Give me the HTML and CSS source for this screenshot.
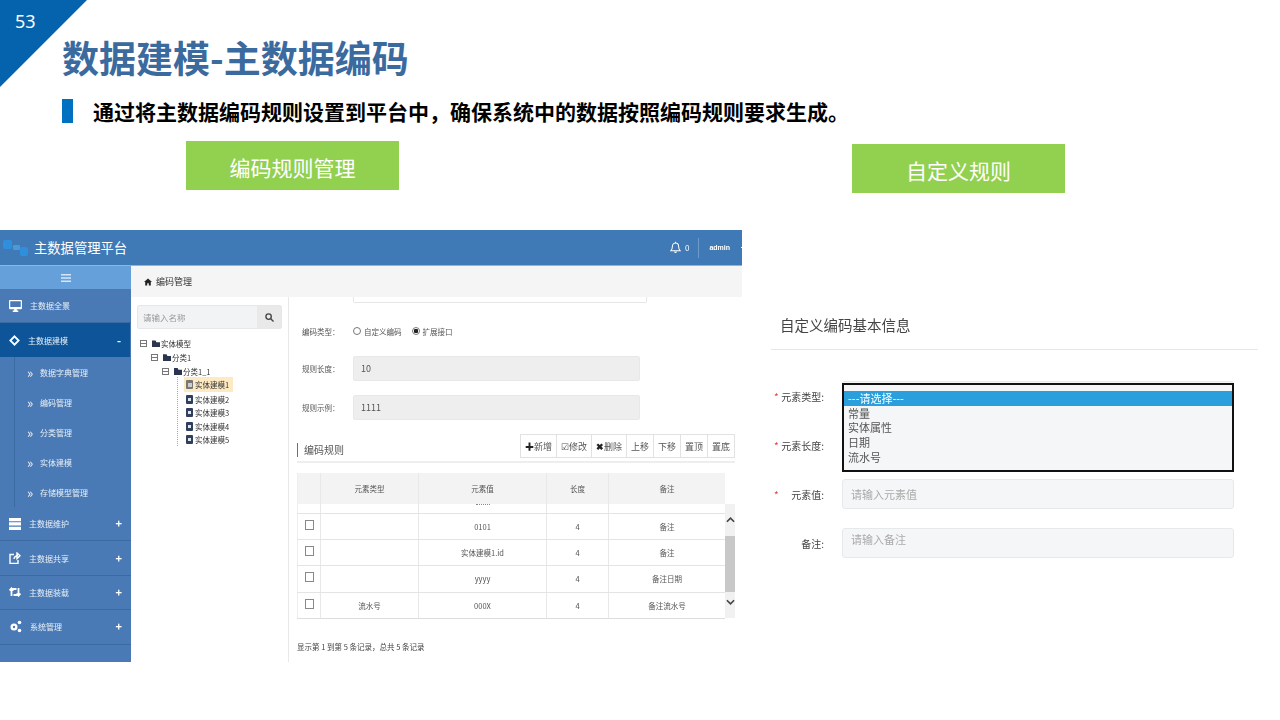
FILE: index.html
```html
<!DOCTYPE html>
<html lang="zh-CN">

<head>
    <meta charset="UTF-8">
    <title>数据建模-主数据编码</title>
    <link rel="stylesheet" href="styles.css">
</head>

<body>
    <div class="slide">
        <div class="corner"></div>
        <span class="page-no">53</span>

        <h1 class="title">数据建模-主数据编码</h1>
        <p class="subtitle"><span class="subtitle-bar"></span>通过将主数据编码规则设置到平台中，确保系统中的数据按照编码规则要求生成。</p>

        <div class="tags">
            <div class="tag">编码规则管理</div>
            <div class="tag tag-right">自定义规则</div>
        </div>

        <div class="shots">
            <!-- 左边: 平台截图 -->
            <div class="app">
                <div class="topbar">
                    <svg class="logo" viewBox="0 0 26 18" width="26" height="18">
                        <rect x="0" y="1" width="9" height="9" rx="2" fill="#2f8fdc" />
                        <rect x="10" y="6" width="7" height="5" rx="1" fill="#4a9ad8" />
                        <rect x="17" y="8" width="8" height="9" rx="2" fill="#2f8fdc" />
                    </svg>
                    <span class="brand">主数据管理平台</span>
                    <div class="top-right">
                        <svg viewBox="0 0 12 14" width="11" height="13" fill="none" stroke="#fff" stroke-width="1.1">
                            <path d="M1 10.5h10c-1.300-1.300-1.600-2.500-1.600-4.500 0-2-1.400-3.800-3.400-3.800S2.600 4 2.600 6c0 2-.3 3.200-1.600 4.500zM5 11.500c.2 1.200 1.800 1.200 2 0M6 .6v1.600" />
                        </svg>
                        <span class="bell-count">0</span>
                        <span class="top-sep"></span>
                        <span class="admin">admin</span>
                        <span class="caret"></span>
                    </div>
                </div>
                <div class="app-body">
                    <div class="sidebar">
                        <div class="side-toggle">
                            <svg viewBox="0 0 10 8" width="10" height="8" fill="#d7e6f5">
                                <path d="M0 0h10v1.600H0zM0 3.200h10v1.600H0zM0 6.400h10V8H0z" />
                            </svg>
                        </div>
                        <div class="side-item">
                            <svg viewBox="0 0 14 13" width="13" height="12" fill="#fff">
                                <path d="M1 0h12a1 1 0 0 1 1 1v8a1 1 0 0 1-1 1H8.500v1.500H10V13H4v-1.500h1.500V10H1a1 1 0 0 1-1-1V1a1 1 0 0 1 1-1zm.3 1.300v6.400h11.400V1.300z" />
                            </svg>
                            <span>主数据全景</span>
                        </div>
                        <div class="side-item active">
                            <svg viewBox="0 0 12 12" width="11" height="11" fill="none" stroke="#fff" stroke-width="2">
                                <path d="M6 1.500 10.500 6 6 10.500 1.500 6z" />
                            </svg>
                            <span>主数据建模</span>
                            <b class="side-sign">-</b>
                        </div>
                        <div class="side-sub">
                            <div class="sub-item"><span class="chev">»</span>数据字典管理</div>
                            <div class="sub-item"><span class="chev">»</span>编码管理</div>
                            <div class="sub-item"><span class="chev">»</span>分类管理</div>
                            <div class="sub-item"><span class="chev">»</span>实体建模</div>
                            <div class="sub-item"><span class="chev">»</span>存储模型管理</div>
                        </div>
                        <div class="side-item">
                            <svg viewBox="0 0 12 12" width="12" height="12" fill="#fff">
                                <path d="M0 0h12v3.300H0zM0 4.300h12v3.300H0zM0 8.700h12V12H0z" />
                            </svg>
                            <span>主数据维护</span>
                            <b class="side-sign">+</b>
                        </div>
                        <div class="side-item">
                            <svg viewBox="0 0 12 12" width="12" height="12" fill="none" stroke="#fff" stroke-width="1.400">
                                <path d="M5 2.500H1v9h8V8M5 7c.3-2 2-3.200 4-3.200M8 1l3 2.800-3 2.800z" />
                            </svg>
                            <span>主数据共享</span>
                            <b class="side-sign">+</b>
                        </div>
                        <div class="side-item">
                            <svg viewBox="0 0 12 10" width="12" height="10" fill="none" stroke="#fff" stroke-width="1.800">
                                <path d="M2.500 9V2h5M9.500 1v7h-5M0.500 3.500l2-2.200 2 2.200M7.500 6.500l2 2.200 2-2.200" />
                            </svg>
                            <span>主数据装载</span>
                            <b class="side-sign">+</b>
                        </div>
                        <div class="side-item">
                            <svg viewBox="0 0 13 13" width="13" height="13" fill="#fff">
                                <circle cx="5" cy="7" r="3.500" />
                                <circle cx="5" cy="7" r="1.200" fill="#4a7ab5" />
                                <circle cx="10.500" cy="2.500" r="1.800" />
                                <circle cx="10.500" cy="10.500" r="1.800" />
                            </svg>
                            <span>系统管理</span>
                            <b class="side-sign">+</b>
                        </div>
                    </div>

                    <div class="main">
                        <div class="crumb">
                            <svg viewBox="0 0 10 9" width="8" height="8" fill="#222">
                                <path d="M5 0 10 4.500H8.500V9H6V6H4v3H1.500V4.500H0z" />
                            </svg>
                            编码管理
                        </div>
                        <div class="panes">
                            <div class="tree-pane">
                                <div class="search">
                                    <span class="search-text">请输入名称</span>
                                    <span class="search-btn">
                                        <svg viewBox="0 0 10 10" width="9" height="9" fill="none" stroke="#444" stroke-width="1.500">
                                            <circle cx="4" cy="4" r="3" />
                                            <path d="M6.300 6.300 9.500 9.500" />
                                        </svg>
                                    </span>
                                </div>
                                <div class="tree">
                                    <div class="node lv1"><i class="fold"></i><i class="folder"></i>实体模型</div>
                                    <div class="node lv2"><i class="fold"></i><i class="folder"></i>分类1</div>
                                    <div class="node lv3"><i class="fold"></i><i class="folder"></i>分类1_1</div>
                                    <div class="leaves">
                                        <div class="node leaf current"><i class="file"></i>实体建模1</div>
                                        <div class="node leaf"><i class="file"></i>实体建模2</div>
                                        <div class="node leaf"><i class="file"></i>实体建模3</div>
                                        <div class="node leaf"><i class="file"></i>实体建模4</div>
                                        <div class="node leaf"><i class="file"></i>实体建模5</div>
                                    </div>
                                </div>
                            </div>

                            <div class="form-pane">
                                <div class="stub"></div>
                                <div class="form-row radio-row">
                                    <label>编码类型：</label>
                                    <span class="radio"></span><span class="radio-text">自定义编码</span>
                                    <span class="radio on"></span><span>扩展接口</span>
                                </div>
                                <div class="form-row">
                                    <label>规则长度：</label>
                                    <div class="readonly">10</div>
                                </div>
                                <div class="form-row">
                                    <label>规则示例：</label>
                                    <div class="readonly">1111</div>
                                </div>

                                <div class="rule-head">
                                    <h3>编码规则</h3>
                                    <div class="toolbar">
                                        <button><b>✚</b>新增</button>
                                        <button>☑修改</button>
                                        <button><b>✖</b>删除</button>
                                        <button>上移</button>
                                        <button>下移</button>
                                        <button>置顶</button>
                                        <button>置底</button>
                                    </div>
                                </div>

                                <div class="rule-table">
                                    <div class="rows">
                                        <div class="tr th">
                                            <div></div><div>元素类型</div><div>元素值</div><div>长度</div><div>备注</div>
                                        </div>
                                        <div class="tr clipped">
                                            <div></div><div></div><div><i class="cut-dots"></i></div><div></div><div></div>
                                        </div>
                                        <div class="tr">
                                            <div><i class="check"></i></div><div></div><div>0101</div><div>4</div><div>备注</div>
                                        </div>
                                        <div class="tr">
                                            <div><i class="check"></i></div><div></div><div>实体建模1.id</div><div>4</div><div>备注</div>
                                        </div>
                                        <div class="tr tall">
                                            <div><i class="check"></i></div><div></div><div>yyyy</div><div>4</div><div>备注日期</div>
                                        </div>
                                        <div class="tr">
                                            <div><i class="check"></i></div><div>流水号</div><div>000X</div><div>4</div><div>备注流水号</div>
                                        </div>
                                    </div>
                                    <div class="scroll">
                                        <svg viewBox="0 0 10 6" width="9" height="6" fill="none" stroke="#444" stroke-width="1.800">
                                            <path d="M1 5 5 1l4 4" />
                                        </svg>
                                        <div class="thumb"></div>
                                        <svg viewBox="0 0 10 6" width="9" height="6" fill="none" stroke="#444" stroke-width="1.800">
                                            <path d="M1 1l4 4 4-4" />
                                        </svg>
                                    </div>
                                </div>
                                <p class="records">显示第 1 到第 5 条记录，总共 5 条记录</p>
                            </div>
                        </div>
                    </div>
                </div>
            </div>

            <!-- 右边: 自定义编码表单 -->
            <div class="panel">
                <h2 class="panel-title">自定义编码基本信息</h2>
                <div class="panel-form">
                    <div class="field-row">
                        <label><em>*</em>元素类型:</label>
                        <div class="field"></div>
                    </div>
                    <div class="field-row">
                        <label><em>*</em>元素长度:</label>
                        <div class="field"></div>
                    </div>
                    <div class="field-row">
                        <label><em>*</em>元素值:</label>
                        <div class="field hint">请输入元素值</div>
                    </div>
                    <div class="field-row">
                        <label class="no-star">备注:</label>
                        <div class="field hint hint-high">请输入备注</div>
                    </div>
                    <div class="listbox">
                        <div class="opt selected">---请选择---</div>
                        <div class="opt">常量</div>
                        <div class="opt">实体属性</div>
                        <div class="opt">日期</div>
                        <div class="opt">流水号</div>
                    </div>
                </div>
            </div>
        </div>
    </div>
</body>

</html>
```

FILE: styles.css
```css
* {
    box-sizing: border-box;
    margin: 0;
    padding: 0;
}

body {
    background: #fff;
    font-family: "Noto Sans CJK SC", "Noto Sans", sans-serif;
}

.slide {
    position: relative;
    width: 1280px;
    height: 720px;
    overflow: hidden;
    background: #fff;
}

.corner {
    position: absolute;
    left: 0;
    top: 0;
    width: 87px;
    height: 87px;
    background: #0563ae;
    clip-path: polygon(0 0, 100% 0, 0 100%);
}

.page-no {
    position: absolute;
    left: 15px;
    top: 8px;
    color: #fff;
    font-family: "Noto Sans", sans-serif;
    font-size: 18px;
    line-height: 26px;
}

.title {
    height: 56px;
    margin-top: 29px;
    padding-left: 62px;
    color: #3b6a9e;
    font-size: 37px;
    font-weight: 700;
    line-height: 56px;
}

.subtitle {
    display: flex;
    align-items: center;
    height: 24px;
    margin-top: 14px;
    padding-left: 62px;
    color: #000;
    font-size: 21px;
    font-weight: 700;
    line-height: 24px;
    white-space: nowrap;
}

.subtitle-bar {
    width: 11px;
    height: 24px;
    margin-right: 20px;
    background: #0070c0;
}

/* 绿色标签 */
.tags {
    display: flex;
    align-items: flex-start;
    height: 89px;
    margin-top: 18px;
    padding-left: 186px;
}

.tag {
    width: 213px;
    height: 49px;
    background: #92d050;
    color: #fff;
    font-size: 21px;
    line-height: 53px;
    text-align: center;
}

.tag-right {
    margin-top: 3px;
    margin-left: 453px;
}

.shots {
    display: flex;
    align-items: flex-start;
}

/* 平台截图 */
.app {
    width: 742px;
    height: 432px;
    overflow: hidden;
    filter: blur(0.3px);
}

.topbar {
    display: flex;
    align-items: center;
    height: 36px;
    padding-left: 3px;
    background: #3f7ab6;
    border-bottom: 1px solid #8db4da;
    color: #fff;
}

.brand {
    margin-left: 5px;
    font-size: 13.300px;
}

.top-right {
    display: flex;
    align-items: center;
    margin-left: auto;
    margin-right: -2px;
    font-size: 8px;
}

.bell-count {
    margin-left: 4px;
}

.top-sep {
    width: 1px;
    height: 20px;
    margin: 0 10px 0 9px;
    background: #6d9bc9;
}

.admin {
    font-family: "Liberation Sans", sans-serif;
    font-size: 7px;
    font-weight: 700;
}

.caret {
    width: 3px;
    height: 1px;
    margin-left: 11px;
    background: #fff;
}

.app-body {
    display: flex;
    height: 396px;
}

.sidebar {
    flex: none;
    width: 131px;
    background: #4a7ab5;
    color: #e8eff7;
    font-size: 8px;
}

.side-toggle {
    display: flex;
    align-items: center;
    justify-content: center;
    height: 23px;
    background: #65a0db;
}

.side-item {
    display: flex;
    align-items: center;
    height: 34px;
    padding: 0 9px;
    border-bottom: 1px solid #3a6a9f;
}

.side-item svg {
    flex: none;
    margin-right: 8px;
}

.side-item.active {
    margin-right: 1px;
    background: #0d5598;
    border-bottom: 0;
}

.side-sub ~ .side-item {
    height: 34.400px;
}

.side-sign {
    margin-left: auto;
    color: #fff;
    font-size: 11px;
    line-height: 1;
}

.side-sub {
    height: 150px;
    margin-left: 14px;
    padding-left: 12px;
    border-left: 1px solid #3a6a9f;
}

.sub-item {
    display: flex;
    align-items: center;
    height: 30px;
}

.chev {
    width: 13px;
    font-size: 13px;
    line-height: 1;
}

.main {
    flex: 1;
    min-width: 0;
}

.crumb {
    display: flex;
    align-items: center;
    gap: 4px;
    height: 31px;
    padding-left: 13px;
    background: #f5f5f5;
    color: #333;
    font-size: 9px;
}

.panes {
    display: flex;
    height: 365px;
}

.tree-pane {
    flex: none;
    width: 158px;
    padding: 8px 6px;
    border-right: 1px solid #e8e8e8;
}

.search {
    display: flex;
    height: 24px;
    background: #f1f3f4;
    border: 1px solid #e5e7e8;
    border-radius: 2px;
    color: #999;
    font-size: 8.500px;
    line-height: 22px;
}

.search-text {
    flex: 1;
    padding-left: 5px;
}

.search-btn {
    display: flex;
    align-items: center;
    justify-content: center;
    width: 24px;
    background: #e9e9e9;
}

.tree {
    margin-top: 8px;
    color: #333;
    font-size: 7.500px;
}

.node {
    display: flex;
    align-items: center;
    height: 13.800px;
}

.lv1 {
    padding-left: 3px;
}

.lv2 {
    padding-left: 14px;
}

.lv3 {
    padding-left: 25px;
}

.leaves {
    margin-left: 40px;
    padding-left: 6px;
    border-left: 1px dotted #aaa;
}

.leaf {
    width: 49px;
    height: 13.500px;
    padding-left: 2px;
}

.leaf.current {
    height: 15px;
    margin-top: -1px;
    background: #fde9c2;
}

.fold {
    width: 7px;
    height: 7px;
    margin-right: 5px;
    border: 1px solid #777;
    background: linear-gradient(#777, #777) center / 5px 1px no-repeat;
}

.folder {
    width: 8px;
    height: 7px;
    margin-right: 1px;
    background: #2b3550;
    clip-path: polygon(0 0, 45% 0, 55% 25%, 100% 25%, 100% 100%, 0 100%);
}

.file {
    width: 7px;
    height: 9px;
    margin-right: 2px;
    background: linear-gradient(#dfe5ee, #dfe5ee) center / 3px 3px no-repeat #2f3f5c;
    border-radius: 1px;
}

.current .file {
    background: linear-gradient(#ccc, #ccc) center / 4px 4px no-repeat #777;
}

.form-pane {
    flex: 1;
    min-width: 0;
    padding: 0 7px 0 8px;
    color: #555;
    font-size: 7.500px;
}

.stub {
    width: 294px;
    height: 6px;
    margin-left: 56px;
    border: 1px solid #e6e6e6;
    border-top: 0;
    border-radius: 0 0 2px 2px;
}

.form-row {
    display: flex;
    align-items: center;
    margin-top: 14px;
    padding-left: 5px;
}

.form-row label {
    width: 51px;
}

.radio-row {
    height: 20px;
    margin-top: 18px;
    margin-bottom: 15px;
}

.radio {
    width: 8px;
    height: 8px;
    margin-right: 3px;
    border: 1px solid #777;
    border-radius: 50%;
}

.radio.on {
    background: radial-gradient(circle, #222 0 2px, #fff 2.500px);
}

.radio-text {
    margin-right: 10px;
}

.readonly {
    width: 287px;
    height: 25px;
    padding-left: 7px;
    background: #eee;
    border: 1px solid #e8e8e8;
    border-radius: 2px;
    font-size: 9px;
    line-height: 23px;
}

.rule-head {
    display: flex;
    justify-content: space-between;
    height: 29px;
    margin-top: 14px;
    border-bottom: 2px solid #eee;
}

.rule-head h3 {
    height: 14px;
    margin-top: 9px;
    padding-left: 6px;
    border-left: 1px solid #3f7ab6;
    color: #555;
    font-size: 10px;
    font-weight: 400;
    line-height: 14px;
}

.toolbar {
    display: flex;
    height: 24px;
}

.toolbar button {
    height: 24px;
    padding: 0 4px;
    background: #fff;
    border: 1px solid #e2e2e2;
    border-left-width: 0;
    color: #555;
    font-family: inherit;
    font-size: 9px;
    white-space: nowrap;
}

.toolbar button:first-child {
    border-left-width: 1px;
}

.toolbar b {
    color: #222;
}

.rule-table {
    display: flex;
    margin-top: 10px;
    color: #555;
}

.rows {
    width: 428px;
    border-bottom: 1px solid #ddd;
}

.tr {
    display: grid;
    grid-template-columns: 23px 98px 128px 62px 117px;
    height: 26px;
    border-top: 1px solid #e4e4e4;
    text-align: center;
    line-height: 25px;
}

.tr > div {
    border-left: 1px solid #e8e8e8;
    overflow: hidden;
}

.tr > div:first-child {
    border-left-color: #eee;
}

.tr.tall {
    height: 27px;
}

.tr.th {
    height: 31px;
    background: #f3f3f3;
    border-top: 0;
    line-height: 31px;
}

.tr.clipped {
    height: 9px;
    border-top: 0;
}

.cut-dots {
    display: block;
    width: 14px;
    margin: 0 auto;
    border-top: 1px dotted #888;
}

.check {
    display: inline-block;
    width: 9px;
    height: 10px;
    margin-top: 5px;
    border: 1px solid #888;
}

.scroll {
    display: flex;
    flex-direction: column;
    align-items: center;
    width: 10px;
    height: 114px;
    margin-top: 31px;
    padding-top: 13px;
    background: #f1f1f1;
}

.thumb {
    flex: none;
    width: 100%;
    height: 56px;
    margin: 13px 0 7px;
    background: #c8c8c8;
}

.records {
    margin-top: 22px;
    color: #444;
    line-height: 12px;
}

/* 右边表单 */
.panel {
    width: 487px;
    margin-top: 85px;
    margin-left: 29px;
    color: #444;
    filter: blur(0.3px);
}

.panel-title {
    height: 35px;
    padding-left: 9px;
    border-bottom: 1px solid #e8e8e8;
    font-size: 14.500px;
    font-weight: 400;
    line-height: 19px;
}

.panel-form {
    position: relative;
    display: flex;
    flex-direction: column;
    gap: 19px;
    margin-top: 31px;
}

.field-row {
    display: flex;
    align-items: center;
    padding-left: 3px;
}

.field-row label {
    display: flex;
    justify-content: space-between;
    width: 50px;
    margin-right: 18px;
    font-size: 10px;
    white-space: nowrap;
}

.field-row em {
    color: #d9452f;
    font-style: normal;
}

.field-row .no-star {
    justify-content: flex-end;
}

.field {
    width: 392px;
    height: 30px;
    padding-left: 8px;
    background: #f4f6f7;
    border: 1px solid #e6e9ea;
    border-radius: 3px;
    font-size: 11px;
    line-height: 28px;
}

.hint {
    color: #aaa;
}

.hint-high {
    line-height: 21px;
}

/* 展开的下拉框盖在前两行上 */
.listbox {
    position: absolute;
    left: 71px;
    top: 2px;
    width: 392px;
    height: 89px;
    padding-top: 6px;
    background: #f4f6f7;
    border: 2px solid #111;
    color: #555;
    font-size: 11px;
    line-height: 14.700px;
}

.opt {
    padding-left: 4px;
}

.selected {
    background: #2a9fdc;
    color: #fff;
}
```
